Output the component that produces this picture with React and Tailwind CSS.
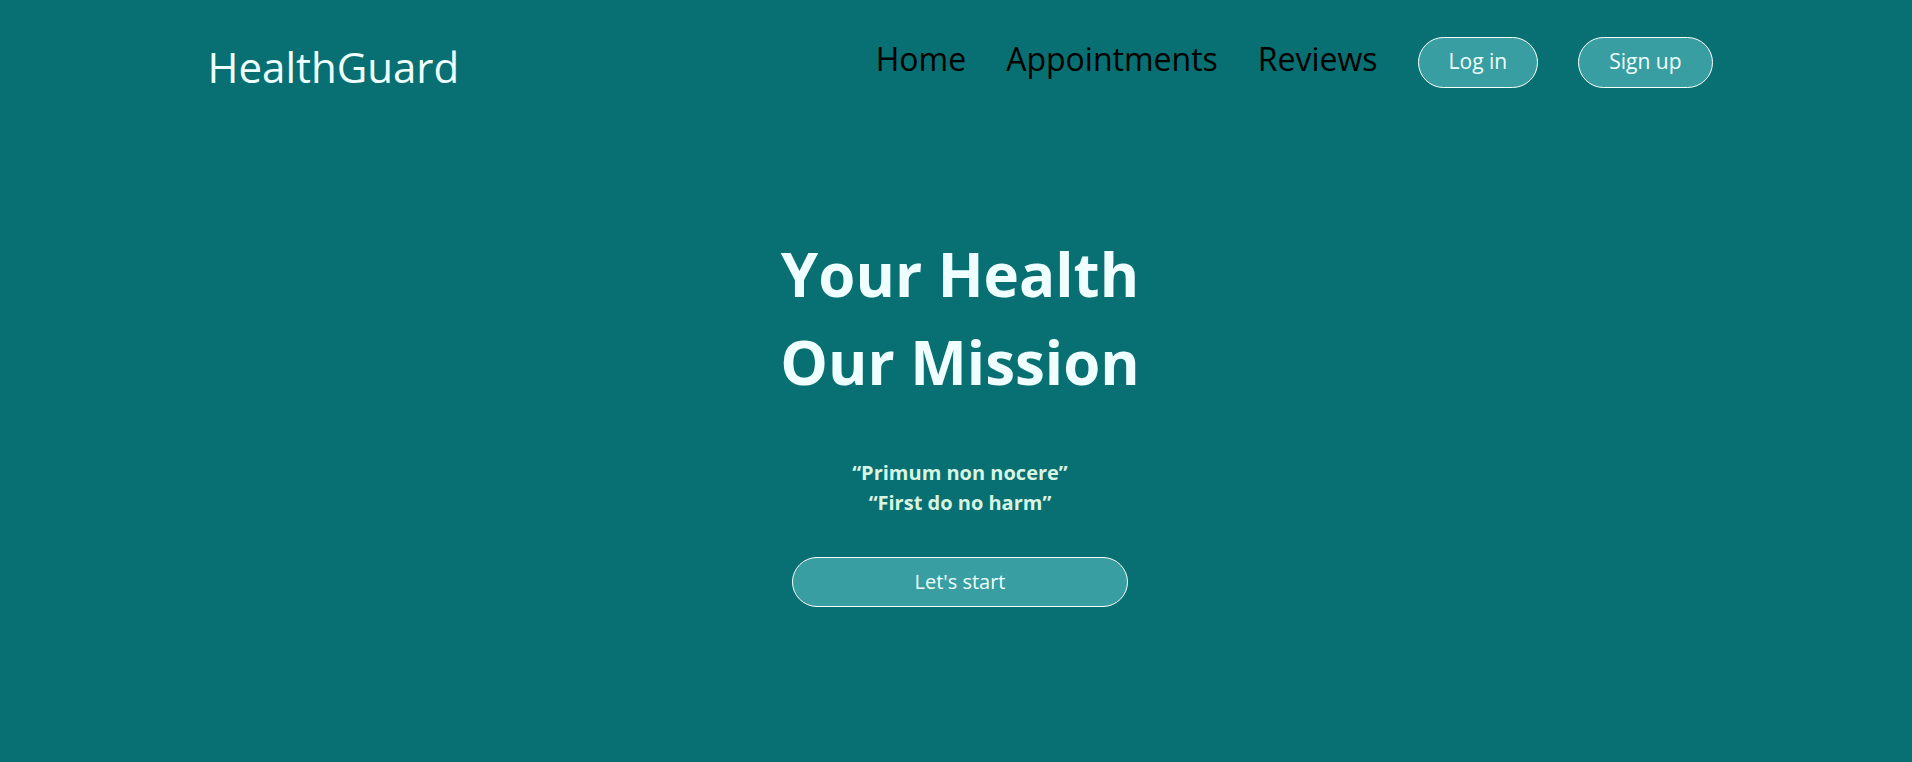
import React from "react";

const navLinks = ["Home", "Appointments", "Reviews"];

const App = () => {
  return (
    <div
      className="min-h-screen bg-[#086f72] pl-[8px]"
      style={{ fontFamily: "'Open Sans', 'Liberation Sans', sans-serif" }}
    >
      {/* Header */}
      <header className="w-[1505px] mx-auto pt-[36px] flex items-center justify-between">
        <a href="#" className="text-[42px] leading-none text-[#f0ffff] mt-[10px]">
          HealthGuard
        </a>
        <nav className="flex items-center gap-[40px]">
          {navLinks.map((link) => (
            <a key={link} href="#" className="text-[32px] leading-none text-black -mt-[7px]">
              {link}
            </a>
          ))}
          <button className="h-[51px] px-[30px] rounded-full border border-white bg-[#389ea1] text-[21px] text-[#f0ffff]">
            Log in
          </button>
          <button className="h-[51px] px-[30px] rounded-full border border-white bg-[#389ea1] text-[21px] text-[#f0ffff]">
            Sign up
          </button>
        </nav>
      </header>

      {/* Hero */}
      <main className="flex flex-col items-center pt-[142px]">
        <h1 className="text-[60px] leading-[88px] font-bold text-[#f0ffff] text-center">
          Your Health
          <br />
          Our Mission
        </h1>
        <p className="mt-[52px] text-[20px] leading-[30px] font-bold text-[#d8f5e2] text-center">
          “Primum non nocere”
          <br />
          “First do no harm”
        </p>
        <button className="mt-[39px] w-[336px] h-[50px] rounded-full border border-white bg-[#389ea1] text-[20px] text-[#f0ffff]">
          Let's start
        </button>
      </main>
    </div>
  );
};

export default App;
